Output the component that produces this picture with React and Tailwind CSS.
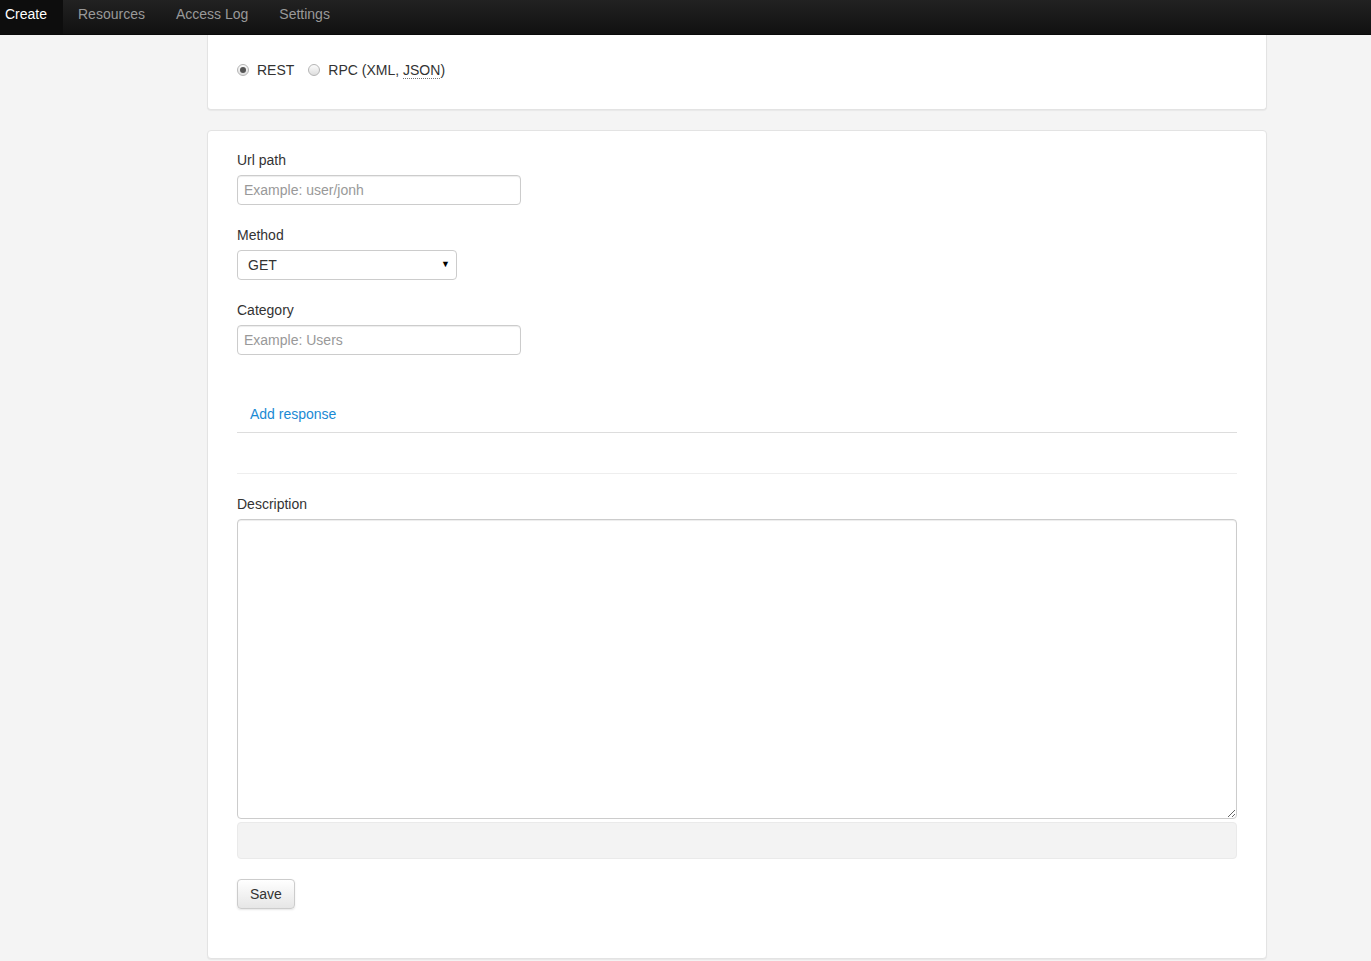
import React from "react";

const font = { fontFamily: '"Liberation Sans", Arial, sans-serif' };

const Radio = ({ checked, label }) => (
  <label className="flex items-center gap-[8px] cursor-pointer">
    <span className="w-[12px] h-[12px] rounded-full border border-[#b5b5b5] bg-gradient-to-b from-[#fcfcfc] to-[#dedede] flex items-center justify-center">
      {checked && <span className="w-[6px] h-[6px] rounded-full bg-[#555]" />}
    </span>
    <span>{label}</span>
  </label>
);

const Field = ({ label, children }) => (
  <div className="mb-[20px]">
    <div className="h-[20px] leading-[20px] mb-[5px]">{label}</div>
    {children}
  </div>
);

export default function App() {
  return (
    <div className="min-h-screen bg-[#f4f4f4] text-[14px] text-[#333]" style={font}>
      <div className="h-[35px] bg-gradient-to-b from-[#222] to-[#111] border-b border-[#0a0a0a] flex">
        <a className="w-[63px] pl-[5px] h-[34px] leading-[28px] bg-[#0d0d0d] text-white text-[14px]">Create</a>
        <a className="pl-[15px] pr-[16px] h-[34px] leading-[28px] text-[#999]">Resources</a>
        <a className="pl-[15px] pr-[16px] h-[34px] leading-[28px] text-[#999]">Access Log</a>
        <a className="px-[15px] h-[34px] leading-[28px] text-[#999]">Settings</a>
      </div>

      <div className="ml-[207px] w-[1060px]">
        <div className="bg-white border border-t-0 border-[#e3e3e3] rounded-b-[4px] shadow-[0_1px_1px_rgba(0,0,0,0.05)] px-[29px] pt-[25px] pb-[29px]">
          <div className="flex items-center gap-[14px] h-[20px]">
            <Radio checked label="REST" />
            <Radio
              label={
                <span>
                  RPC (XML,{" "}
                  <abbr className="no-underline border-b border-dotted border-[#777]">JSON</abbr>)
                </span>
              }
            />
          </div>
        </div>

        <div className="mt-[20px] bg-white border border-[#e3e3e3] rounded-[4px] shadow-[0_1px_1px_rgba(0,0,0,0.05)] px-[29px] pt-[19px] pb-[49px]">
          <Field label="Url path">
            <input
              className="w-[284px] h-[30px] px-[6px] border border-[#ccc] rounded-[4px] outline-none placeholder:text-[#999] shadow-[inset_0_1px_1px_rgba(0,0,0,0.075)]"
              placeholder="Example: user/jonh"
              style={font}
            />
          </Field>
          <Field label="Method">
            <div className="relative w-[220px] h-[30px]">
              <select
                className="appearance-none w-full h-full pl-[10px] border border-[#ccc] rounded-[4px] bg-white outline-none text-[#333]"
                style={font}
                defaultValue="GET"
              >
                <option>GET</option>
                <option>POST</option>
                <option>PUT</option>
                <option>DELETE</option>
              </select>
              <span className="absolute right-[7px] top-[8px] text-[9px] text-black pointer-events-none">▼</span>
            </div>
          </Field>
          <Field label="Category">
            <input
              className="w-[284px] h-[30px] px-[6px] border border-[#ccc] rounded-[4px] outline-none placeholder:text-[#999] shadow-[inset_0_1px_1px_rgba(0,0,0,0.075)]"
              placeholder="Example: Users"
              style={font}
            />
          </Field>

          <div className="mt-[40px] border-b border-[#ddd] flex">
            <a className="px-[13px] h-[37px] pt-[1px] leading-[37px] text-[#1a8ad4] cursor-pointer">Add response</a>
          </div>
          <div className="h-[40px]" />
          <div className="border-t border-[#eee]" />

          <div className="mt-[20px]">
            <div className="h-[20px] leading-[20px] mb-[5px]">Description</div>
            <textarea
              className="block w-[1000px] h-[300px] border border-[#ccc] rounded-[4px] outline-none p-[6px] shadow-[inset_0_1px_1px_rgba(0,0,0,0.075)]"
              style={font}
            />
            <div className="mt-[3px] w-[1000px] h-[37px] bg-[#f3f3f3] border border-[#eaeaea] rounded-[4px]" />
          </div>

          <button
            className="mt-[20px] h-[30px] px-[12px] border border-[#ccc] rounded-[4px] bg-gradient-to-b from-white to-[#e6e6e6] text-[#333] shadow-[0_1px_2px_rgba(0,0,0,0.1)]"
            style={font}
          >
            Save
          </button>
        </div>
      </div>
    </div>
  );
}
